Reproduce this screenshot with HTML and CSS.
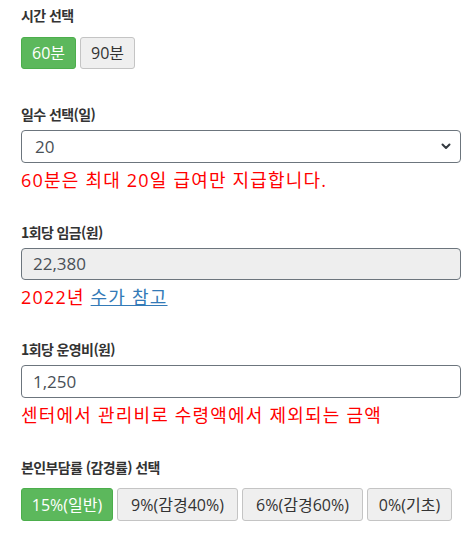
FILE: index.html
```html
<!DOCTYPE html>
<html lang="ko">
<head>
<meta charset="utf-8">
<link rel="stylesheet" href="styles.css">
</head>
<body>
<div class="wrap">
  <div class="field">
    <div class="label">시간 선택</div>
    <div class="btns">
      <button class="btn on">60분</button>
      <button class="btn">90분</button>
    </div>
  </div>

  <div class="field">
    <div class="label">일수 선택(일)</div>
    <div class="select">
      <span>20</span>
      <svg width="10" height="7" viewBox="0 0 10 7"><path d="M1.5 1.5 L5 5 L8.5 1.5" fill="none" stroke="#343a40" stroke-width="2" stroke-linecap="round" stroke-linejoin="round"/></svg>
    </div>
    <div class="note">60분은 최대 20일 급여만 지급합니다.</div>
  </div>

  <div class="field">
    <div class="label">1회당 임금(원)</div>
    <div class="input disabled">22,380</div>
    <div class="note">2022년 <a class="link" href="#">수가 참고</a></div>
  </div>

  <div class="field">
    <div class="label">1회당 운영비(원)</div>
    <div class="input">1,250</div>
    <div class="note">센터에서 관리비로 수령액에서 제외되는 금액</div>
  </div>

  <div class="field">
    <div class="label">본인부담률 (감경률) 선택</div>
    <div class="btns">
      <button class="btn on wide">15%(일반)</button>
      <button class="btn wide">9%(감경40%)</button>
      <button class="btn wide">6%(감경60%)</button>
      <button class="btn wide">0%(기초)</button>
    </div>
  </div>
</div>
</body>
</html>
```

FILE: styles.css
```css
* { box-sizing: border-box; }
body {
  margin: 0;
  background: #fff;
  font-family: "Open Sans", "Noto Sans CJK KR", sans-serif;
  color: #333;
}
.wrap {
  padding: 5px 7px 0 21px;
  width: 468px;
}
.field {
  margin-bottom: 30px;
}
.field:first-child {
  margin-bottom: 35px;
}
.label {
  font-family: "Noto Sans CJK KR", sans-serif;
  font-size: 14px;
  font-weight: bold;
  line-height: 20px;
  letter-spacing: -0.6px;
  margin-bottom: 6px;
  color: #333;
}
.btns {
  display: flex;
  gap: 4px;
  margin-top: 11px;
}
.field:first-child .btns { margin-top: 12px; }
.btn {
  font-family: "Open Sans", "Noto Sans CJK KR", sans-serif;
  font-size: 16px;
  font-weight: 400;
  line-height: 20px;
  height: 32px;
  width: 55px;
  padding: 0;
  border: 1px solid #c4c4c4;
  border-radius: 3px;
  background: #efefef;
  color: #333;
}
.btn.on {
  background: #5cb85c;
  border-color: #4cae4c;
  color: #fff;
}
.btn.wide {
  height: 33px;
}
.btn.wide:nth-child(1) { width: 92px; }
.btn.wide:nth-child(2) { width: 121px; }
.btn.wide:nth-child(3) { width: 121px; }
.btn.wide:nth-child(4) { width: 85px; }
.select, .input {
  width: 440px;
  height: 33px;
  border: 1px solid #6c757d;
  border-radius: 4px;
  font-size: 17px;
  line-height: 31px;
  padding: 0 12px 0 11px;
  color: #495057;
  background: #fff;
}
.select {
  display: flex;
  align-items: center;
  justify-content: space-between;
  padding-left: 13px;
  padding-right: 9px;
}
.input.disabled {
  background: #eee;
  height: 32px;
  line-height: 30px;
}
.note {
  color: #ff0000;
  font-size: 18px;
  line-height: 24px;
  letter-spacing: 1.2px;
  margin-top: 5px;
}
.link {
  color: #337ab7;
  text-decoration: underline;
}
```
